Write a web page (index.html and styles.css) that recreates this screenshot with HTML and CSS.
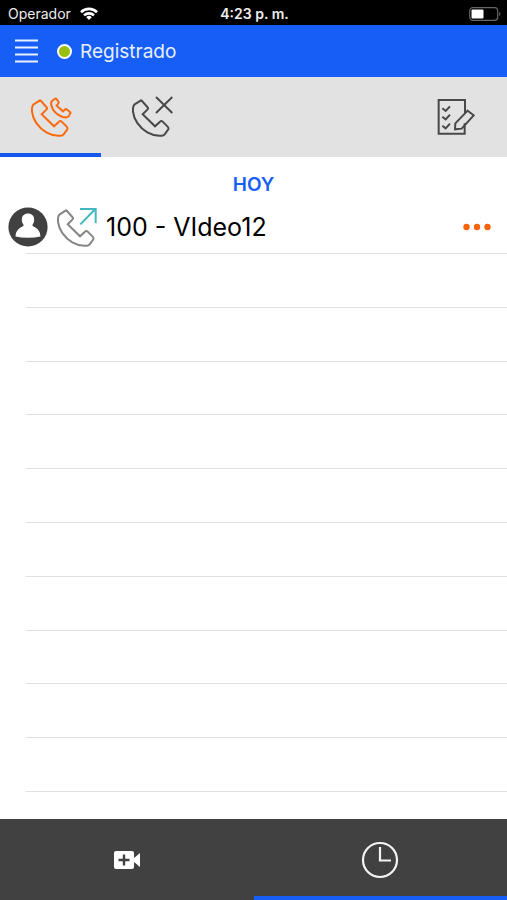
FILE: index.html
```html
<!DOCTYPE html>
<html lang="es">
<head>
  <meta charset="UTF-8">
  <meta name="viewport" content="width=device-width, initial-scale=1">
  <title>Historial de llamadas</title>
  <link rel="stylesheet" href="styles.css">
</head>
<body>

  <div class="status-bar">
    <div class="carrier">
      <span>Operador</span>
      <svg width="18" height="14" viewBox="0 0 18 14" fill="none" stroke="#fff" stroke-width="2.6">
        <path d="M1 5.2a11.4 11.4 0 0 1 16 0"/>
        <path d="M4 8.4a7.1 7.1 0 0 1 10 0"/>
        <path d="M9 13L6.2 10.2a4 4 0 0 1 5.6 0z" fill="#fff" stroke="none"/>
      </svg>
    </div>
    <div class="clock">4:23 p. m.</div>
    <div class="battery">
      <svg width="32" height="14" viewBox="0 0 32 14">
        <rect x=".7" y=".7" width="28" height="12.6" rx="3" fill="none" stroke="#666" stroke-width="1.2"/>
        <rect x="2.5" y="2.5" width="12" height="9" rx="1" fill="#fff"/>
        <path d="M30.2 5v4q1.3-.6 1.3-2t-1.3-2z" fill="#666"/>
      </svg>
    </div>
  </div>

  <header class="header">
    <button class="menu" type="button" aria-label="Menú">
      <svg width="24" height="24" viewBox="0 0 24 24" stroke="#e8efff" stroke-width="2.2">
        <path d="M0 1.5h23M0 8.5h23M0 15.5h23M0 22.5h23"/>
      </svg>
    </button>
    <span class="dot"></span>
    <span class="state">Registrado</span>
  </header>

  <nav class="tabs">
    <button class="tab active" type="button" aria-label="Todas las llamadas">
      <svg class="call" viewBox="90 60 126 126">
        <path d="M120 73L101 85Q95 90 96 107C98 130 115 155 139 169Q160 181 182 179Q188 179 191 175L202 160Q204 156 200 152L185 137Q181 133 177 137L162 151L125 115L139 101Q143 97 139 93L124 76Q122 72 118 74z"/>
        <path d="M165 68L156 75Q152 78 154 88C158 104 171 117 188 123Q201 126 205 122L211 112Q213 110 210 108L200 100Q197 98 195 101L189 106L170 89L175 82Q178 79 175 76L169 69Q167 66 165 68z"/>
      </svg>
    </button>
    <button class="tab" type="button" aria-label="Llamadas perdidas">
      <svg class="call" viewBox="90 60 126 126">
        <path d="M120 73L101 85Q95 90 96 107C98 130 115 155 139 169Q160 181 182 179Q188 179 191 175L202 160Q204 156 200 152L185 137Q181 133 177 137L162 151L125 115L139 101Q143 97 139 93L124 76Q122 72 118 74z"/>
        <path d="M165 63L214 111M214 63L165 111"/>
      </svg>
    </button>
    <button class="tab edit" type="button" aria-label="Editar">
      <svg class="call" viewBox="84 60 126 126">
        <path d="M174 112V72H95V173H173V142"/>
        <path d="M106 97l10 8l13-14M106 122l10 8l13-14M106 149l10 8l13-14"/>
        <path d="M182 104l18 14l-36 40l-20 2l1-18z"/>
      </svg>
    </button>
  </nav>

  <main class="history">
    <h2 class="day">HOY</h2>
    <ul class="list">
      <li class="row">
        <svg class="avatar" viewBox="0 0 40 40">
          <circle cx="20" cy="20" r="19.6" fill="#414141"/>
          <path d="M20 6.500c3.800 0 6.200 2.500 6.200 6c0 2.600-1 4.200-1.700 5.300c-.3.800.2 1.200 1 1.600c4.300 2 6.900 5 6.900 10q-5.400 1.300-12.400 1.300T7.600 29.400c0-5 2.600-8 6.900-10c.8-.4 1.300-.8 1-1.600c-.7-1.100-1.700-2.700-1.700-5.300c0-3.500 2.400-6 6.200-6z" fill="#fff"/>
        </svg>
        <svg class="call outgoing" viewBox="90 60 126 126">
          <path d="M120 73L101 85Q95 90 96 107C98 130 115 155 139 169Q160 181 182 179Q188 179 191 175L202 160Q204 156 200 152L185 137Q181 133 177 137L162 151L125 115L139 101Q143 97 139 93L124 76Q122 72 118 74z"/>
          <path class="arrow" d="M163 115L208 69M162 69H209V112"/>
        </svg>
        <span class="name">100 - VIdeo12</span>
        <button class="more" type="button" aria-label="Más opciones">
          <svg width="28" height="8" viewBox="0 0 28 8" fill="#f96208">
            <circle cx="3.500" cy="4" r="3.200"/>
            <circle cx="14" cy="4" r="3.200"/>
            <circle cx="24.500" cy="4" r="3.200"/>
          </svg>
        </button>
      </li>
      <li class="empty"></li>
      <li class="empty"></li>
      <li class="empty"></li>
      <li class="empty"></li>
      <li class="empty"></li>
      <li class="empty"></li>
      <li class="empty"></li>
      <li class="empty"></li>
      <li class="empty"></li>
      <li class="empty"></li>
    </ul>
  </main>

  <nav class="bottom-nav">
    <button class="nav-item" type="button" aria-label="Video">
      <svg width="26" height="18" viewBox="0 0 26 18">
        <path d="M2 0h16q2 0 2 2v5l6-5v14l-6-5v5q0 2-2 2H2q-2 0-2-2V2q0-2 2-2z" fill="#fff"/>
        <path d="M10 3.500v11M4.500 9h11" stroke="#414141" stroke-width="2.400"/>
      </svg>
    </button>
    <button class="nav-item active" type="button" aria-label="Historial">
      <svg width="38" height="38" viewBox="0 0 38 38" fill="none" stroke="#f4f4f4" stroke-width="2.200">
        <circle cx="19" cy="19" r="17"/>
        <path d="M19 6v13.500h11"/>
      </svg>
    </button>
  </nav>

</body>
</html>
```
FILE: styles.css
```css
* {
  box-sizing: border-box;
}
body {
  display: flex;
  flex-direction: column;
  min-height: 100vh;
  margin: 0;
  font-family: Inter, "Liberation Sans", sans-serif;
  background: #fff;
  color: #000;
}
button {
  padding: 0;
  border: none;
  background: none;
  cursor: pointer;
}
svg {
  display: block;
  flex: none;
}

.status-bar {
  display: grid;
  grid-template-columns: 1fr auto 1fr;
  align-items: center;
  height: 25px;
  padding: 2px 6px 0 8px;
  background: #000;
  color: #eee;
  font-size: 14px;
}
.carrier {
  display: flex;
  align-items: center;
  gap: 9px;
}
.clock {
  font-weight: 600;
}
.battery {
  justify-self: end;
}

.header {
  display: flex;
  align-items: center;
  height: 52px;
  padding: 0 15px;
  background: #175ef7;
  color: #e8efff;
}
.dot {
  width: 15px;
  height: 15px;
  margin: 0 8px 0 18px;
  border: 2px solid #fff;
  border-radius: 50%;
  background: #97bf0d;
}
.state {
  font-size: 19px;
}

.tabs {
  display: grid;
  grid-template-columns: repeat(5, 1fr);
  height: 80px;
  background: #e2e2e2;
}
.tab {
  display: flex;
  align-items: center;
  justify-content: center;
  color: #484848;
}
.tab.active {
  color: #f96a0f;
  box-shadow: inset 0 -4px #1558ee;
}
.edit {
  grid-column: 5;
}
.call {
  width: 42px;
  height: 42px;
  fill: none;
  stroke: currentColor;
  stroke-width: 6;
}

.history {
  display: flex;
  flex: 1;
  flex-direction: column;
  padding-bottom: 27px;
}
.day {
  margin: 0;
  padding-top: 16px;
  color: #175ef7;
  font-size: 19px;
  font-weight: 600;
  line-height: 24px;
  text-align: center;
}
.list {
  display: flex;
  flex: 1;
  flex-direction: column;
  margin: 0;
  padding: 0;
  list-style: none;
}
.row {
  display: flex;
  align-items: center;
  gap: 8px;
  height: 57px;
  padding: 3px 16px 0 8px;
  background: linear-gradient(#e0e0e0, #e0e0e0) 26px 100% / 100% 1px no-repeat;
}
.avatar {
  width: 40px;
  height: 40px;
}
.outgoing {
  color: #858585;
}
.arrow {
  stroke: #43b6bf;
}
.name {
  flex: 1;
  font-size: 25px;
}
.empty {
  flex: 1;
  margin-left: 26px;
  border-bottom: 1px solid #e0e0e0;
}

.bottom-nav {
  display: grid;
  grid-template-columns: 1fr 1fr;
  height: 81px;
  background: #414141;
}
.nav-item {
  display: flex;
  align-items: center;
  justify-content: center;
}
.nav-item.active {
  box-shadow: inset 0 -4px #175ef7;
}
```
